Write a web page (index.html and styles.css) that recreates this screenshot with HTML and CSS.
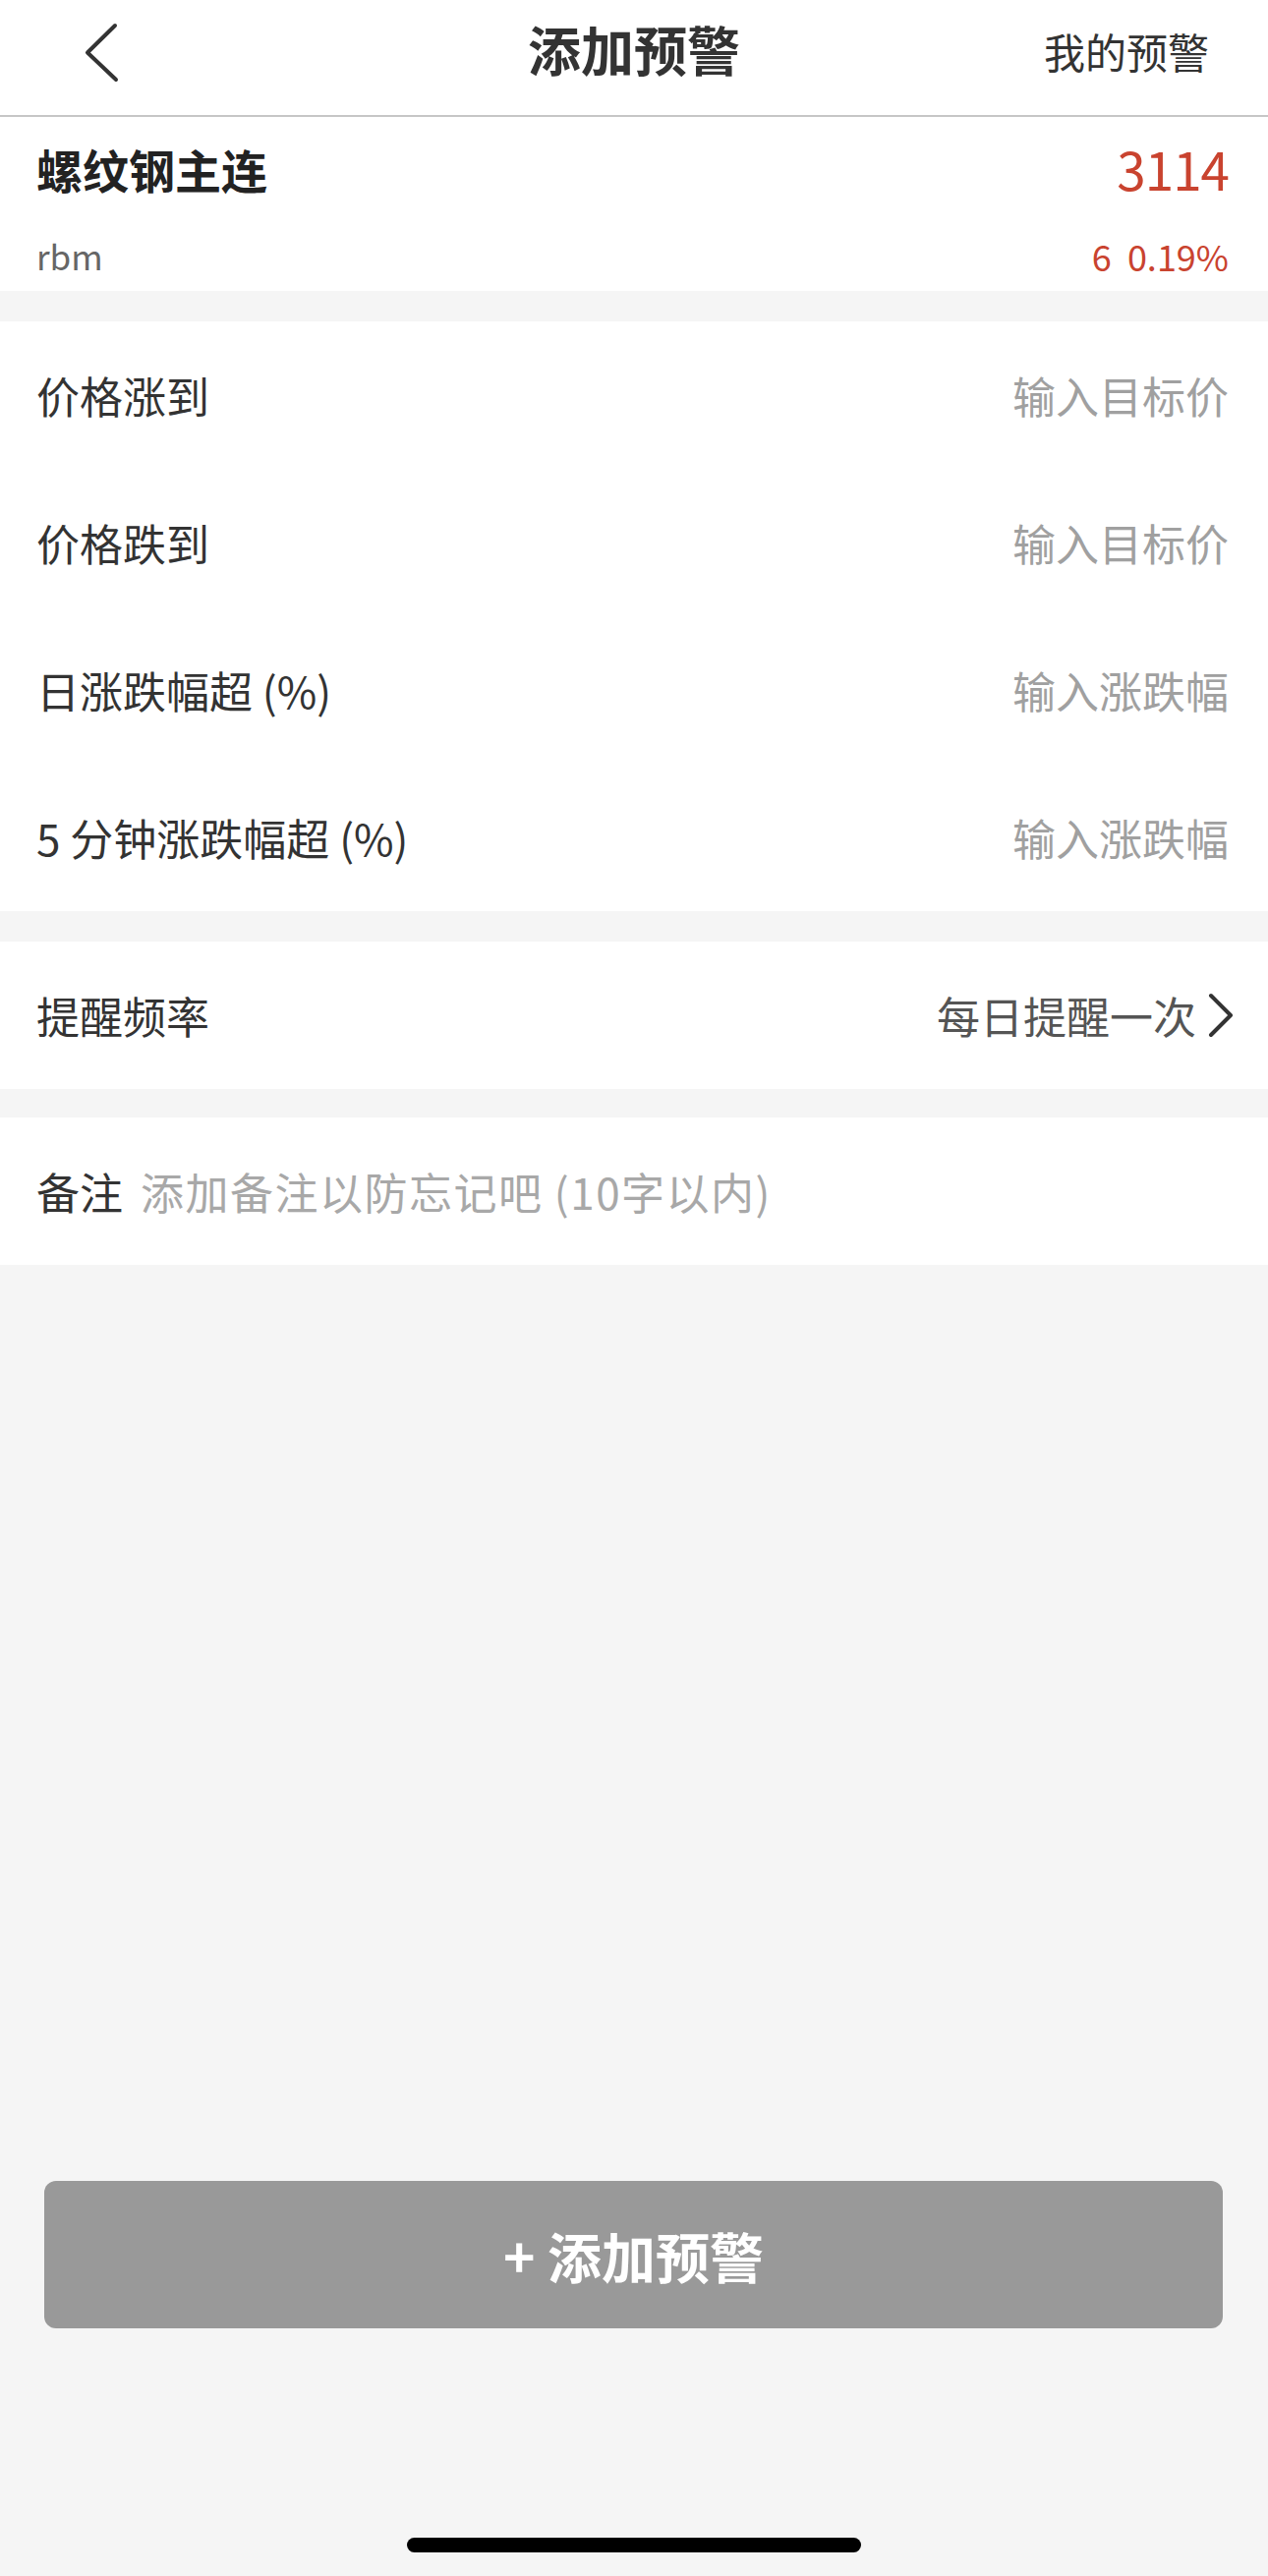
FILE: index.html
```html
<!DOCTYPE html>
<html lang="zh-CN">
<head>
<meta charset="utf-8">
<title>添加预警</title>
<link rel="stylesheet" href="styles.css">
</head>
<body>
<div class="page">
  <header class="nav">
    <div class="nav-left">
      <svg class="back" width="40" height="64" viewBox="0 0 40 64">
        <polyline points="32,3 4,30.5 33,58" fill="none" stroke="#333" stroke-width="4" stroke-linecap="round" stroke-linejoin="round"/>
      </svg>
    </div>
    <div class="nav-title">添加预警</div>
    <div class="nav-right">我的预警</div>
  </header>

  <section class="stock">
    <div class="stock-row1">
      <span class="stock-name">螺纹钢主连</span>
      <span class="stock-price">3114</span>
    </div>
    <div class="stock-row2">
      <span class="stock-code">rbm</span>
      <span class="stock-change">6&nbsp;&nbsp;0.19%</span>
    </div>
  </section>

  <section class="group">
    <div class="row"><span class="label">价格涨到</span><span class="placeholder">输入目标价</span></div>
    <div class="row"><span class="label">价格跌到</span><span class="placeholder">输入目标价</span></div>
    <div class="row"><span class="label">日涨跌幅超 (%)</span><span class="placeholder">输入涨跌幅</span></div>
    <div class="row"><span class="label">5 分钟涨跌幅超 (%)</span><span class="placeholder">输入涨跌幅</span></div>
  </section>

  <section class="group group-freq">
    <div class="row">
      <span class="label">提醒频率</span>
      <span class="value">每日提醒一次
        <svg class="chev" width="30" height="46" viewBox="0 0 30 46">
          <polyline points="5,3 25,23 5,43" fill="none" stroke="#333" stroke-width="4" stroke-linecap="round" stroke-linejoin="round"/>
        </svg>
      </span>
    </div>
  </section>

  <section class="group group-note">
    <div class="row row-note">
      <span class="label">备注</span>
      <span class="note-ph">添加备注以防忘记吧 (10字以内)</span>
    </div>
  </section>

  <div class="spacer"></div>

  <footer class="footer">
    <button class="add-btn">+ 添加预警</button>
    <div class="home-indicator"></div>
  </footer>
</div>
</body>
</html>
```

FILE: styles.css
```css
* {
  box-sizing: border-box;
}

html, body {
  margin: 0;
  padding: 0;
}

body {
  background: #f5f5f5;
  font-family: "Noto Sans CJK SC", "Noto Sans", "Liberation Sans", sans-serif;
  color: #333;
}

.page {
  width: 1290px;
  min-height: 2621px;
  display: flex;
  flex-direction: column;
}

/* header */
.nav {
  height: 119px;
  background: #fff;
  border-bottom: 2px solid #c6c6c6;
  display: grid;
  grid-template-columns: 1fr auto 1fr;
  align-items: center;
  padding: 0 0 18px 0;
}

.nav-left {
  display: flex;
  align-items: center;
  padding-left: 85px;
}

.back {
  display: block;
  margin-top: 10px;
}

.nav-title {
  font-size: 54px;
  font-weight: 700;
  color: #333;
  line-height: 1;
}

.nav-right {
  justify-self: end;
  padding-right: 60px;
  font-size: 42px;
  color: #333;
  line-height: 1;
  margin-top: 4px;
}

/* stock */
.stock {
  background: #fff;
  padding: 0 40px 0 37px;
  height: 177px;
}

.stock-row1 {
  height: 110px;
  display: flex;
  justify-content: space-between;
  align-items: center;
  padding-bottom: 6px;
}

.stock-name {
  font-size: 47px;
  font-weight: 700;
  color: #222;
  line-height: 1;
}

.stock-price {
  font-size: 53px;
  color: #c9432f;
  line-height: 1;
  letter-spacing: -1px;
}

.stock-row2 {
  height: 67px;
  display: flex;
  justify-content: space-between;
  align-items: center;
  padding-bottom: 6px;
}

.stock-code {
  font-size: 35px;
  color: #666;
  line-height: 1;
}

.stock-change {
  font-size: 36px;
  color: #c9432f;
  line-height: 1;
}

/* groups */
.group {
  background: #fff;
  margin-top: 31px;
  padding: 0 40px 0 37px;
}

.group-freq {
  margin-top: 31px;
}

.group-note {
  margin-top: 29px;
}

.row {
  height: 150px;
  display: flex;
  justify-content: space-between;
  align-items: center;
}

.label {
  font-size: 44px;
  color: #333;
  line-height: 1;
}

.placeholder {
  font-size: 44px;
  color: #a0a0a0;
  line-height: 1;
}

.value {
  display: flex;
  align-items: center;
  font-size: 44px;
  color: #555;
  line-height: 1;
}

.chev {
  display: block;
  margin-left: 10px;
  margin-right: -7px;
}

.row-note {
  justify-content: flex-start;
  gap: 18px;
}

.note-ph {
  font-size: 44px;
  color: #a8a8a8;
  line-height: 1;
  letter-spacing: 1.5px;
}

.spacer {
  flex: 1;
}

/* footer */
.footer {
  display: flex;
  flex-direction: column;
  align-items: center;
  padding: 0 46px 24px 45px;
}

.add-btn {
  width: 100%;
  height: 150px;
  border: none;
  border-radius: 12px;
  background: #999999;
  color: #fff;
  font-family: "Noto Sans CJK SC", "Noto Sans", "Liberation Sans", sans-serif;
  font-size: 55px;
  font-weight: 700;
  line-height: 1;
  padding: 0;
}

.home-indicator {
  width: 462px;
  height: 15px;
  border-radius: 8px;
  background: #000;
  margin-top: 213px;
}
```
